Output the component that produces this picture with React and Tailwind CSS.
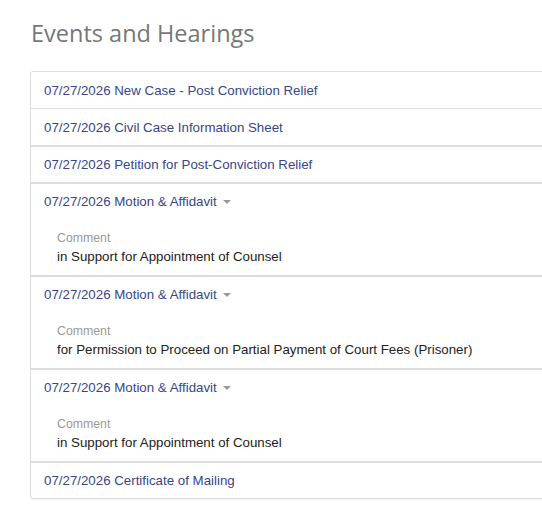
import React from "react";

const rows = [
  { title: "New Case - Post Conviction Relief" },
  { title: "Civil Case Information Sheet" },
  { title: "Petition for Post-Conviction Relief" },
  { title: "Motion & Affidavit", comment: "in Support for Appointment of Counsel" },
  {
    title: "Motion & Affidavit",
    comment: "for Permission to Proceed on Partial Payment of Court Fees (Prisoner)",
  },
  { title: "Motion & Affidavit", comment: "in Support for Appointment of Counsel" },
  { title: "Certificate of Mailing" },
];

function Caret() {
  return (
    <span className="ml-[6px] inline-block h-0 w-0 border-x-[4px] border-t-[4px] border-x-transparent border-t-[#999] align-middle" />
  );
}

export default function App() {
  return (
    <div className="h-[532px] w-[542px] overflow-hidden bg-white font-['Liberation_Sans',Arial,sans-serif]">
      <div className="pl-[30px] pt-[20px]">
        <h2 className="mb-[24px] pl-[1px] font-['Open_Sans',sans-serif] text-[23.5px] leading-[27px] text-[#777]">
          Events and Hearings
        </h2>

        <div className="w-[540px] rounded-[3px] border border-[#ddd] shadow-[0_1px_1px_rgba(0,0,0,0.06)]">
          {rows.map((r, i) => (
            <div
              key={i}
              className={
                i === 0
                  ? "px-[13px] pb-[9px] pt-[10px]"
                  : i === 1
                  ? "border-t border-[#ddd] px-[13px] pb-[9px] pt-[10px]"
                  : "border-t-2 border-[#ddd] px-[13px] py-[9px]"
              }
            >
              <div className="text-[13.3px] leading-[17px] text-[#36468a]">
                07/27/2026 {r.title}
                {r.comment && <Caret />}
              </div>
              {r.comment && (
                <div className="pl-[13px] pt-[20px]">
                  <div className="text-[12.3px] leading-[17px] text-[#999]">Comment</div>
                  <div className="text-[13.3px] leading-[19px] text-[#222]">{r.comment}</div>
                </div>
              )}
            </div>
          ))}
        </div>
      </div>
    </div>
  );
}
